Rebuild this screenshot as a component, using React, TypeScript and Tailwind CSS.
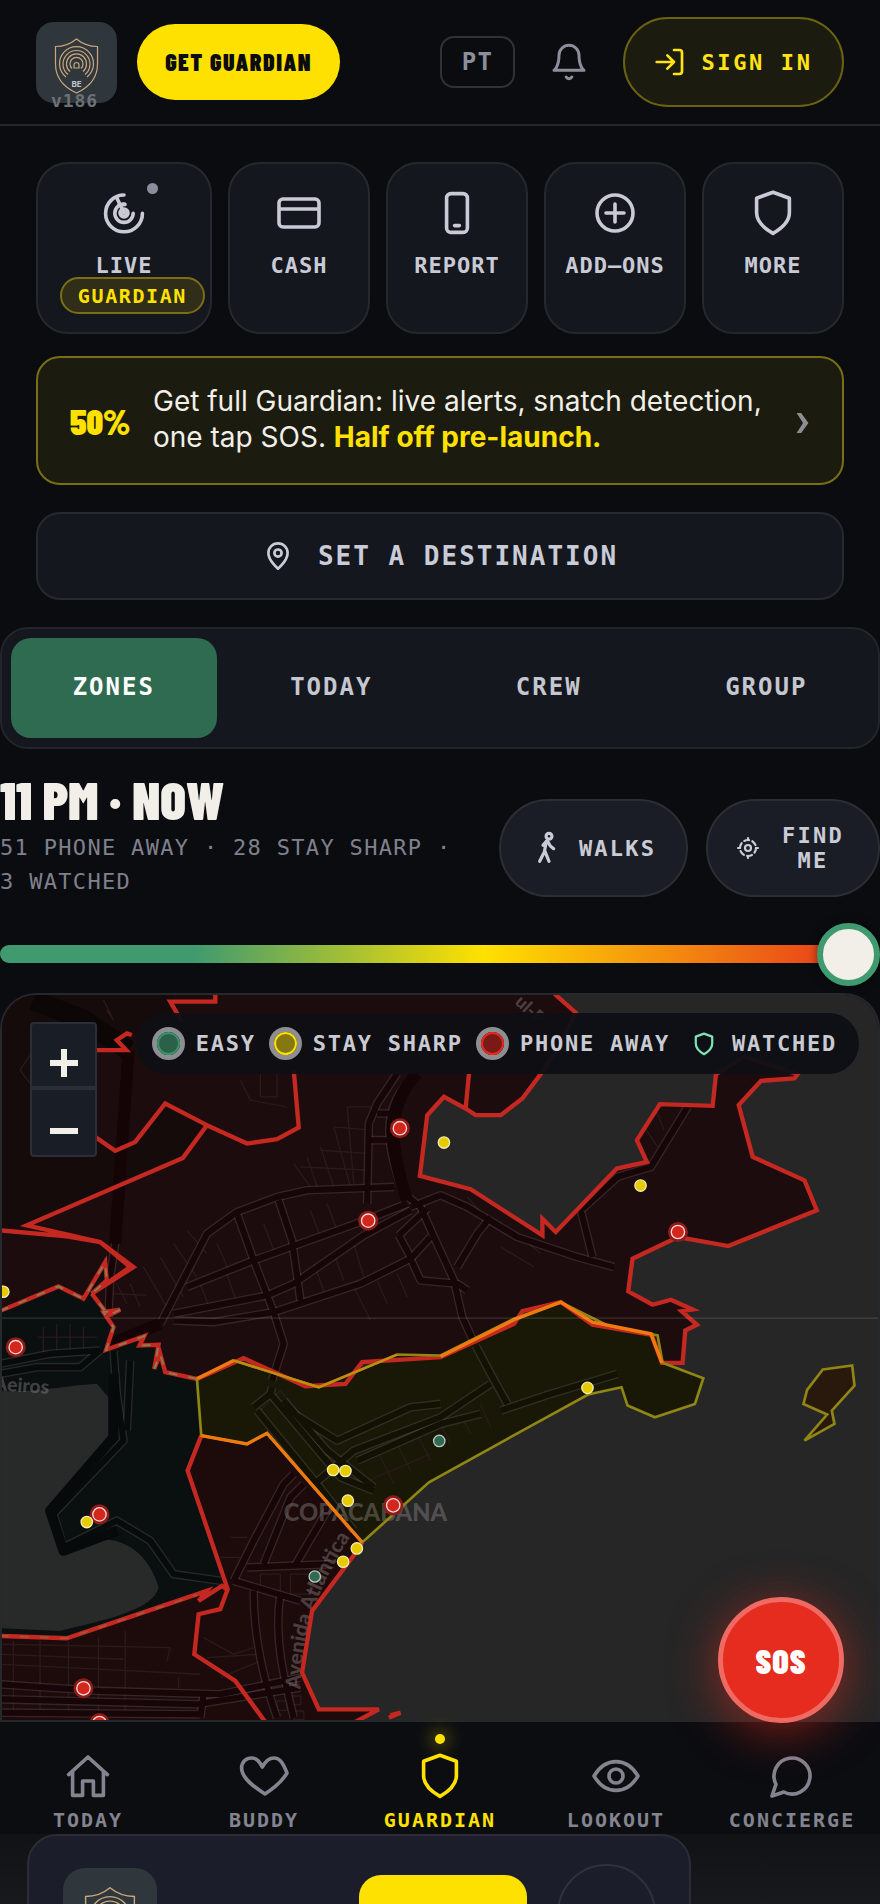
import type { ReactNode } from "react";

const mono = "font-['DejaVu_Sans_Mono',monospace]";
const display = "font-['Barlow_Condensed','Roboto_Condensed',sans-serif] font-black";

type IconProps = { className?: string; width?: number; children: ReactNode };

function Icon({ className = "size-12", width = 1.8, children }: IconProps) {
  return (
    <svg
      viewBox="0 0 24 24"
      aria-hidden="true"
      className={`${className} shrink-0 overflow-visible`}
      fill="none"
      stroke="currentColor"
      strokeWidth={width}
      strokeLinecap="round"
      strokeLinejoin="round"
    >
      {children}
    </svg>
  );
}

const shieldPath = "M12 1.6l8.2 3v7.2c0 4.6-3.6 7.8-8.2 10.4-4.6-2.6-8.2-5.800-8.2-10.400V4.600z";

function Logo({ className }: { className: string }) {
  return (
    <span className={`${className} block shrink-0 bg-[#30373c]`}>
      <svg viewBox="0 0 81 81" aria-hidden="true" className="size-full" fill="none" stroke="#c9a77c" strokeWidth="1.2">
        <path d="M40.5 17C34.5 22 27 24.5 19.5 24.5V42c0 14 8 23 21 29 13-6 21-15 21-29V24.5C54 24.5 46.5 22 40.5 17z" />
        <path d="M30 55a17 17 0 1 1 21 0" />
        <path d="M32 52.5a13.5 13.5 0 1 1 17 0" />
        <path d="M34 49.5a10 10 0 1 1 13 0" />
        <path d="M36 46.5a6.5 6.5 0 1 1 9 0" />
        <path d="M38 46v-3a2.5 2.5 0 0 1 5 0v3z" />
        <text x="40.5" y="64.5" textAnchor="middle" fontSize="8" fontWeight="bold" fontFamily="Inter, sans-serif" fill="#c4c5cb" stroke="none">
          BE
        </text>
      </svg>
    </span>
  );
}

function Header() {
  return (
    <header className="flex h-[126px] items-center border-b-2 border-[#25272b] px-9">
      <a href="#home" className="relative block size-[81px]" aria-label="Home v186">
        <Logo className="size-[81px] rounded-[18px]" />
        <span className={`${mono} absolute right-1 -bottom-2 left-0 text-center text-lg leading-5 font-bold tracking-wider text-[#6d7176]`}>
          v186
        </span>
      </a>
      <button className={`${display} ml-5 h-[76px] w-[203px] rounded-full bg-[#ffe100] text-2xl tracking-[1.5px] text-[#0b0c10]`}>GET GUARDIAN</button>
      <div className="ml-auto flex items-center gap-[34px]">
        <button className={`${mono} h-[52px] w-[75px] rounded-[14px] border-2 border-[#303238] text-2xl font-bold tracking-wider text-[#8d8e9b]`}>
          PT
        </button>
        <button aria-label="Notifications" className="text-[#8d8e9b]">
          <Icon className="size-10" width={1.8}>
            <path d="M6 8a6 6 0 0 1 12 0c0 7 3 9 3 9H3s3-2 3-9" />
            <path d="M10.3 21a1.94 1.94 0 0 0 3.4 0" />
          </Icon>
        </button>
        <button
          className={`${mono} flex h-[90px] w-[221px] items-center justify-center gap-[15px] rounded-full border-2 border-[#6a6211] bg-[#1c1b0f] text-[22px] font-bold tracking-[0.12em] text-[#ffe414]`}
        >
          <Icon className="size-8" width={2}>
            <path d="M15 3h4a2 2 0 0 1 2 2v14a2 2 0 0 1-2 2h-4M10 17l5-5-5-5M15 12H2" />
          </Icon>
          SIGN IN
        </button>
      </div>
    </header>
  );
}

const tiles = [
  {
    label: "LIVE",
    icon: (
      <>
        <path d="M12 3a9.2 9.2 0 1 0 9.2 9.2" />
        <path d="M12 7.5a4.6 4.6 0 1 0 4.6 4.6" />
        <circle cx="12" cy="12" r="1.8" strokeWidth="2.2" />
        <path d="M12 12L8.5 4.6M9.5 8l3-.3" />
      </>
    ),
  },
  { label: "CASH", icon: <path d="M4 5h16a2 2 0 0 1 2 2v10a2 2 0 0 1-2 2H4a2 2 0 0 1-2-2V7a2 2 0 0 1 2-2zM2 10h20" /> },
  {
    label: "REPORT",
    icon: <path d="M9 2.3h6a2.2 2.2 0 0 1 2.2 2.2v15a2.2 2.2 0 0 1-2.2 2.2H9a2.2 2.2 0 0 1-2.2-2.2v-15A2.2 2.2 0 0 1 9 2.3zM10.8 18.3h2.4" />,
  },
  {
    label: "ADD–ONS",
    icon: (
      <>
        <circle cx="12" cy="12" r="9" />
        <path d="M12 7.500v9M7.500 12h9" />
      </>
    ),
  },
  { label: "MORE", icon: <path d={shieldPath} /> },
];

function Tiles() {
  return (
    <nav aria-label="Shortcuts" className="grid grid-cols-[176fr_142fr_142fr_142fr_142fr] gap-4">
      {tiles.map((tile, i) => (
        <button
          key={tile.label}
          className="relative flex h-[172px] flex-col items-center rounded-[32px] border-2 border-[#26282d] bg-[#14171e] pt-[25px] text-[#c9cad6]"
        >
          <Icon>{tile.icon}</Icon>
          <span className={`${mono} mt-[15px] text-[22px] leading-7 font-bold tracking-[1px]`}>{tile.label}</span>
          {i === 0 && (
            <>
              <span className="absolute top-[19px] right-[52px] size-[11px] rounded-full bg-[#8d8e9b]" />
              <span
                className={`${mono} absolute top-[113px] right-[5px] flex h-[37px] items-center rounded-full border-2 border-[#7a6f14] bg-[#302d18] px-4 text-xl font-bold tracking-[0.08em] text-[#ffe100]`}
              >
                GUARDIAN
              </span>
            </>
          )}
        </button>
      ))}
    </nav>
  );
}

const tabs = ["ZONES", "TODAY", "CREW", "GROUP"];

function Tabs() {
  return (
    <div role="tablist" className="mt-[27px] grid h-[122px] grid-cols-4 gap-3 rounded-[28px] border-2 border-[#232529] bg-[#14171e] p-[9px]">
      {tabs.map((tab, i) => (
        <button
          key={tab}
          role="tab"
          aria-selected={i === 0}
          className={`${mono} rounded-[20px] pb-[2px] text-2xl font-bold tracking-[2px] ${i === 0 ? "bg-[#2e6b50] text-white" : "text-[#c4c6d0]"}`}
        >
          {tab}
        </button>
      ))}
    </div>
  );
}

function TimeRow() {
  const pill = `${mono} flex h-[98px] items-center rounded-full border-2 border-[#2c2e34] bg-[#1a1d25] text-[22px] leading-[25px] font-bold tracking-widest text-[#c9cbd6]`;
  return (
    <section className="mt-[18px] flex items-end justify-between">
      <div className="w-[470px]">
        <h1 className={`${display} text-[53px] leading-[64px] text-[#f1efe8]`}>11 PM · NOW</h1>
        <p className={`${mono} text-[22px] leading-[34px] tracking-[0.06em] text-[#7f818c]`}>51 PHONE AWAY · 28 STAY SHARP · 3 WATCHED</p>
      </div>
      <div className="mb-0.5 flex gap-[18px]">
        <button className={`${pill} w-[189px] justify-center gap-4`}>
          <Icon className="size-8" width={2.4}>
            <circle cx="13.5" cy="3.2" r="2.2" />
            <path d="M11.5 7l-1.500 8M11.500 7l-2.500 3M12.500 7l2 3.500 2.500 2M10 15L6.500 22M10.500 14.500l3 7.500" />
          </Icon>
          WALKS
        </button>
        <button className={`${pill} w-[174px] justify-center gap-4`}>
          <Icon className="size-6" width={2.2}>
            <circle cx="12" cy="12" r="8" strokeDasharray="5 3.4" />
            <circle cx="12" cy="12" r="3" />
            <path d="M12 2v2M12 20v2M2 12h2M20 12h2" />
          </Icon>
          <span className="w-[74px]">FIND ME</span>
        </button>
      </div>
    </section>
  );
}

type Road = { ground: "red" | "green" | "yellow"; d: string };

const roads: Road[] = [
  { ground: "red", d: "M385 180L345 760L330 860L325 980" },
  { ground: "red", d: "M480 1000L620 730L710 665L830 620L920 600L1180 590" },
  { ground: "red", d: "M480 1000L330 1060" },
  { ground: "red", d: "M560 890L760 810L1080 695L1220 640" },
  { ground: "red", d: "M520 970L800 915L880 880L1090 735L1230 660" },
  { ground: "red", d: "M520 990L640 995L820 965L1080 880L1230 805L1290 740" },
  { ground: "red", d: "M710 670L760 810L820 965L850 1060L815 1170" },
  { ground: "red", d: "M835 630L875 750L900 930" },
  { ground: "red", d: "M1100 640L1105 400L1130 340L1190 250" },
  { ground: "red", d: "M1250 250C1130 350 1160 480 1210 610L1260 650L1300 740L1360 870L1385 980L1415 1045" },
  { ground: "red", d: "M1230 650L1320 615L1400 650L1550 740L1730 800L1840 830" },
  { ground: "red", d: "M1230 805L1260 870L1370 880L1400 900" },
  { ground: "red", d: "M1195 735L1230 800M1195 735L1280 655" },
  { ground: "red", d: "M1370 830L1430 730L1470 680" },
  { ground: "red", d: "M1740 660L1775 800" },
  { ground: "red", d: "M1740 660L1850 560L1950 530L2060 350" },
  { ground: "red", d: "M1130 370L1180 370M1110 450L1180 450" },
  { ground: "green", d: "M0 1120L150 1090L300 1080" },
  { ground: "green", d: "M0 1150L110 1130L240 1130L300 1080" },
  { ground: "green", d: "M340 1080L350 1210L370 1350L160 1570L190 1670L350 1590L450 1650L520 1750L660 1770" },
  { ground: "green", d: "M390 1110L380 1320" },
  { ground: "yellow", d: "M1425 1065L1470 1150L1520 1240" },
  { ground: "yellow", d: "M815 1190L810 1210L760 1250M810 1210L1020 1460L1120 1500" },
  { ground: "yellow", d: "M770 1260L950 1480L1060 1620" },
  { ground: "yellow", d: "M850 1250L1010 1350L1230 1250L1320 1240" },
  { ground: "yellow", d: "M850 1230L980 1380L1120 1490" },
  { ground: "yellow", d: "M930 1490L1060 1380L1320 1280L1470 1180M1500 1260L1650 1210L1850 1150" },
  { ground: "yellow", d: "M1070 1410L1320 1300L1440 1270" },
  { ground: "red", d: "M700 1770L760 1650L850 1480L880 1450" },
  { ground: "red", d: "M790 1720L870 1520L910 1480" },
  { ground: "red", d: "M880 1730L980 1560" },
  { ground: "red", d: "M740 1730L1000 1720M700 1770L900 1830" },
  { ground: "red", d: "M760 1800C760 1950 790 2070 830 2180" },
  { ground: "red", d: "M840 1810C820 1940 850 2060 880 2180" },
  { ground: "red", d: "M0 2080L300 2100L660 2110L900 2060" },
  { ground: "red", d: "M0 2125L590 2140L900 2090" },
  { ground: "red", d: "M0 2165L600 2170M610 2110L600 2180" },
];

const roadFill = { red: "#170507", green: "#070b0b", yellow: "#121104" };

const lanes = [
  "M430 830L500 950M480 800L550 920M520 760L590 860M560 720L620 790M880 520L930 590M920 500L950 590M960 470L1000 590M1000 410L1050 590M1040 350L1060 580M1040 350L1110 350M1000 410L1110 420M960 480L1110 490M900 530L1110 540",
  "M650 760L690 850M790 700L820 780M930 660L960 740M980 640L1010 720M600 880L630 960M680 850L710 940M940 820L970 900M1000 790L1030 870M1060 760L1090 860",
  "M1060 890L1110 990M1130 870L1160 940M1190 850L1220 920M350 880L380 940M390 880L420 950M340 910L440 915",
  "M780 1260L840 1200L980 1370M1130 1380L1180 1480M1190 1360L1230 1440M1250 1330L1290 1410M1320 1300L1350 1360M1380 1270L1410 1330M1440 1240L1470 1310M1080 1480L1290 1390",
  "M0 1960L510 1970L500 2010M0 1990L370 2005M0 2020L600 2050M40 1950V2170M120 1950V2170M205 1950V2170M295 1940V2170M375 1920V2170M535 2060V2090M610 1940L700 1990L760 1970M620 2000L780 1990M660 2060L780 2010",
  "M690 1640L740 1640M660 1700L720 1700M130 1010V1090M170 1000V1090M210 1000V1080M250 1010V1080M110 1040H290M780 250V320H830V240M720 270L750 330L860 350",
  "M1400 620L1470 700M1500 770L1600 830M1550 730L1620 790M1960 350L1990 420M1930 410L1970 470M780 1750H840V1800H780zM870 1750H930V1810H870z",
  "M830 2130h30v28h-30zM875 2115h26v26h-26zM880 2160h30v25h-30zM60 240L100 180M60 240L90 280M320 60L340 90L310 30",
];

const markers: { kind: "red" | "yellow" | "green"; x: number; y: number }[] = [
  { kind: "red", x: 1198, y: 414 },
  { kind: "red", x: 1103, y: 691 },
  { kind: "red", x: 47, y: 1070 },
  { kind: "red", x: 2031, y: 725 },
  { kind: "red", x: 298, y: 1571 },
  { kind: "red", x: 250, y: 2092 },
  { kind: "red", x: 1178, y: 1544 },
  { kind: "red", x: 298, y: 2196 },
  { kind: "yellow", x: 1330, y: 457 },
  { kind: "yellow", x: 10, y: 904 },
  { kind: "yellow", x: 1919, y: 586 },
  { kind: "yellow", x: 1760, y: 1192 },
  { kind: "yellow", x: 998, y: 1438 },
  { kind: "yellow", x: 1035, y: 1441 },
  { kind: "yellow", x: 1042, y: 1530 },
  { kind: "yellow", x: 1069, y: 1673 },
  { kind: "yellow", x: 1028, y: 1713 },
  { kind: "yellow", x: 260, y: 1594 },
  { kind: "green", x: 1316, y: 1351 },
  { kind: "green", x: 943, y: 1757 },
];

const coast =
  "M1640 -20L1665 15L1725 68L1680 160L1620 252L1565 325L1500 375L1425 375L1395 355L1330 320L1280 375L1258 557L1410 597L1625 735L1625 685L1665 725L1848 535L1938 515L1908 450L1977 342L2135 347L2145 252L2230 200L2390 252L2380 265L2280 272L2213 345L2255 500L2410 570L2447 660L2182 767L2031 740L1895 805L1882 903L1955 943L2010 928L2075 957L2042 962L2088 1003L2053 1020L2045 1117L1983 1117L1952 1033L1775 1003L1680 935L1565 962L1540 1000L1320 1100L1085 1115L1035 1180L915 1187L730 1103L590 1165";
const ragged = "L495 1145L480 1090L462 1135L475 1063L418 1065L432 1037L318 1078L340 1010L310 965L360 958L325 975L275 910";
const greenZone =
  "M0 962L175 888L250 925L315 815L320 870L275 910L325 975L340 1010L318 1078L432 1037L418 1065L475 1063L462 1135L480 1090L495 1145L590 1165L603 1335L562 1440L680 1785L590 1815L200 1942L0 1935z";
const yellowZone =
  "M590 1165L700 1110L955 1190L1190 1092L1320 1095L1540 985L1680 935L1820 1005L1970 1035L1985 1117L2107 1163L2082 1240L1962 1280L1880 1245L1862 1190L1762 1212L1565 1320L1285 1475L1085 1655L800 1328L740 1360L603 1335z";
const southZone =
  "M603 1335L740 1360L800 1328L1085 1655L1070 1680L935 1860L905 2045L955 2155L1135 2157L1060 2200L790 2200L0 2200V1935L200 1942L600 1810L665 1785L680 1795L562 1440z";

function MapDrawing() {
  return (
    <svg viewBox="6 15 2628 2172" preserveAspectRatio="xMinYMin slice" className="absolute inset-0 size-full" role="img" aria-label="Map of Copacabana">
      <rect x="0" y="0" width="2640" height="2700" fill="#262626" />
      <path d={`${coast}${ragged}L0 960V-20z`} fill="#1d0c0d" />
      <path d="M0 -20H510L535 68L395 135L378 180H290V443L345 482L405 455L495 340L620 405L548 503L80 705L0 720z" fill="#150b0a" />
      <path d={southZone} fill="#1d0b0c" />
      <path d={greenZone} fill="#0a0f0f" />
      <path d={yellowZone} fill="#191807" />
      <path d="M100 30L250 90L385 180" stroke="#0d0606" strokeWidth="60" fill="none" />
      <path d="M0 1200C80 1210 200 1185 290 1180L325 1220V1340L140 1560L185 1685L270 1650C400 1625 460 1730 475 1790C460 1860 300 1890 180 1920L0 1912z" fill="#272a29" />
      <g fill="none" strokeLinejoin="round">
        <g stroke="#2b1a1c" strokeWidth="4">
          {lanes.map((d) => (
            <path key={d} d={d} />
          ))}
        </g>
        <g stroke="#777072" strokeOpacity="0.26" strokeWidth="26">
          {roads.map((road) => (
            <path key={road.d} d={road.d} />
          ))}
        </g>
        <g strokeWidth="18">
          {roads.map((road) => (
            <path key={road.d} d={road.d} stroke={roadFill[road.ground]} />
          ))}
        </g>
        <path d="M1250 250C1150 350 1170 480 1220 630M480 1000L330 1060M385 180L345 760" stroke="#150406" strokeWidth="36" />
        <path d="M340 1150L340 1340L150 1560L190 1680L350 1620" stroke="#060a0a" strokeWidth="30" />
      </g>
      <g fontFamily="Lato, sans-serif" fill="#a5a0a0" fillOpacity="0.36" fontWeight="900">
        <text x="850" y="1592" fontSize="71">COPACABANA</text>
        <text x="-20" y="1200" fontSize="58" transform="rotate(4 0 1200)">Aeiros</text>
        <text x="1540" y="40" fontSize="54" transform="rotate(42 1540 40)">ul-P</text>
        <path id="avenue" d="M900 2095C905 1950 930 1810 1075 1600" fill="none" />
        <text fontSize="62">
          <textPath href="#avenue">Avenida Atlântica</textPath>
        </text>
      </g>
      <g fill="none" stroke="#c42820" strokeWidth="13" strokeLinejoin="miter">
        <path d={`${coast}${ragged}`} />
        <path d="M275 910L400 830L300 755L80 705L548 503L620 405L495 340L405 455L345 482L285 440M620 405L740 460L830 447L895 412L880 240M290 180H378L350 150L380 130L395 135M545 95L510 35H645V10M1405 250L1395 355M0 720L200 738L300 755L390 830L275 910" />
        <path d="M0 962L175 888L250 925L315 815L320 870L275 910" />
        <path d="M603 1335L562 1440L682 1795L660 1855L595 1870L582 1990L705 2070L800 2200M0 1935L200 1942L620 1800L595 1830L665 1785L685 1800M1085 1655L1070 1680L935 1860L905 2045L955 2155H1135L1060 2195M1165 2180L1200 2165L1170 2172" />
      </g>
      <g fill="none" stroke="#8d7a52" strokeWidth="6" strokeDasharray="26 34">
        <path d="M0 962L175 888L250 925L315 815L320 870L275 910" />
        <path d={`M590 1165${ragged}`} />
        <path d="M0 1935L200 1942L590 1812" strokeOpacity="0.5" />
      </g>
      <path d={yellowZone} fill="none" stroke="#8f8614" strokeWidth="8" />
      <path d="M590 1165L700 1110M1320 1098L1540 988L1680 935L1775 995L1950 1030L1983 1117M603 1335L740 1360L800 1328L1085 1655" fill="none" stroke="#f07a10" strokeWidth="10" />
      <path d="M700 1110L955 1190L1190 1092" fill="none" stroke="#c78b10" strokeWidth="7" />
      <path d="M2465 1137L2553 1125L2560 1185L2492 1260L2500 1300L2410 1350L2478 1272L2407 1240L2418 1198z" fill="#29180c" stroke="#8f8614" strokeWidth="8" />
      <path d="M0 983H2640" stroke="#ffffff" strokeOpacity="0.14" strokeWidth="4" />
      {markers.map((m) =>
        m.kind === "red" ? (
          <g key={`${m.x}-${m.y}`}>
            <circle cx={m.x} cy={m.y} r="30" fill="#8f1a1a" />
            <circle cx={m.x} cy={m.y} r="20" fill="#d3261c" stroke="#f3d9d4" strokeWidth="4" />
          </g>
        ) : (
          <circle
            key={`${m.x}-${m.y}`}
            cx={m.x}
            cy={m.y}
            r="17"
            fill={m.kind === "yellow" ? "#e6cb00" : "#2e6b50"}
            stroke={m.kind === "yellow" ? "#f4ecb0" : "#b9c6bf"}
            strokeWidth="4"
          />
        )
      )}
    </svg>
  );
}

function LegendDot({ className }: { className: string }) {
  return (
    <span className="size-[33px] shrink-0 rounded-full border-[5px] border-[#8d8e94]">
      <span className={`${className} block size-full rounded-full border-2`} />
    </span>
  );
}

function CityMap() {
  return (
    <section aria-label="Zone map" className="relative mt-[7px] min-h-[400px] flex-1 overflow-hidden rounded-t-[36px] border-2 border-b-0 border-[#25282d]">
      <MapDrawing />
      <div className="absolute top-[27px] left-7 flex w-[67px] flex-col overflow-hidden rounded border-2 border-[#2a2e38] bg-[#191d26] text-[#f1efe8]">
        <button aria-label="Zoom in" className="flex h-[66px] items-center justify-center border-b-4 border-[#2a2e38] pt-4">
          <svg viewBox="0 0 30 30" className="size-[30px]" stroke="currentColor" strokeWidth="6">
            <path d="M1 15h28M15 1v28" />
          </svg>
        </button>
        <button aria-label="Zoom out" className="flex h-[65px] items-center justify-center pt-4">
          <svg viewBox="0 0 30 30" className="size-[30px]" stroke="currentColor" strokeWidth="6">
            <path d="M1 15h28" />
          </svg>
        </button>
      </div>
      <ul className={`${mono} absolute top-[18px] right-[19px] flex h-[61px] items-center gap-[13px] rounded-full bg-[#0e0f14]/95 pr-[22px] pl-4 text-[22px] font-bold tracking-[0.08em] whitespace-nowrap text-[#c9cad2]`}>
        <li className="flex items-center gap-[11px]">
          <LegendDot className="border-[#3a9469] bg-[#2b6149]" />
          EASY
        </li>
        <li className="flex items-center gap-[11px]">
          <LegendDot className="border-[#ffe100] bg-[#857711]" />
          STAY SHARP
        </li>
        <li className="flex items-center gap-[11px]">
          <LegendDot className="border-[#e8291c] bg-[#7a1a17]" />
          PHONE AWAY
        </li>
        <li className="flex items-center gap-4 pl-[9px]">
          <Icon className="size-6 text-[#7fe3b5]" width={2.2}>
            <path d={shieldPath} />
          </Icon>
          WATCHED
        </li>
      </ul>
    </section>
  );
}

const navItems = [
  { label: "TODAY", icon: <path d="M2.3 11.3L12 2.5l9.7 8.8M4.3 10v11.7h5V14.5h5.4v7.2h5V10" /> },
  {
    label: "BUDDY",
    icon: <path d="M12.5 21C7 17.5 0.8 13 0.8 8 0.8 5 3 3 5.8 3c2.7 0 4 2 5.4 4.5C12.5 5 14.5 3 17 3c3.2 0 4.7 3 6.5 7.5C21.5 14 17 18 12.5 21z" />,
  },
  { label: "GUARDIAN", icon: <path d={shieldPath} /> },
  {
    label: "LOOKOUT",
    icon: (
      <>
        <path d="M1 12C4 7 8 4.8 12 4.8S20 7 23 12C20 17 16 19.2 12 19.2S4 17 1 12z" />
        <circle cx="12" cy="12" r="3.5" />
      </>
    ),
  },
  { label: "CONCIERGE", icon: <path d="M7.9 20A9 9 0 1 0 4 16.1L2 22Z" /> },
];

function BottomNav() {
  return (
    <nav aria-label="Main" className="relative grid h-[114px] shrink-0 grid-cols-5 border-t-2 border-[#25272b] bg-[#0c0d11]">
      {navItems.map((item, i) => (
        <a
          key={item.label}
          href={`#${item.label.toLowerCase()}`}
          className={`relative flex flex-col items-center pt-[30px] ${i === 2 ? "text-[#ffe100]" : "text-[#83848f]"}`}
        >
          {i === 2 && <span className="absolute top-3 size-[10px] rounded-full bg-[#ffe100] shadow-[0_0_18px_#ffe100]" />}
          <Icon>{item.icon}</Icon>
          <span className={`${mono} mt-2 text-xl leading-6 font-bold tracking-[2px]`}>{item.label}</span>
        </a>
      ))}
      <button
        className={`${display} absolute -top-[125px] right-9 size-[126px] rounded-full border-5 border-[#ee6a62] bg-[#e62c1e] text-[34px] tracking-[1px] text-white shadow-[0_8px_48px_rgba(230,44,30,0.55)]`}
      >
        SOS
      </button>
    </nav>
  );
}

export default function App() {
  return (
    <div className="flex h-screen min-h-[1500px] flex-col overflow-hidden bg-[#0a0c10] font-[Inter,sans-serif]">
      <Header />
      <main className="flex flex-1 flex-col pt-9">
        <div className="px-9">
          <Tiles />
          <a href="#offer" className="mt-[22px] flex h-[129px] items-center rounded-3xl border-2 border-[#796f15] bg-[#1b1b0f] px-8">
            <span className={`${display} w-[83px] text-4xl text-[#ffe100]`}>50%</span>
            <span className="flex-1 pr-6 pb-1 text-[28px] leading-9 text-[#f1efe8]">
              Get full Guardian: live alerts, snatch detection, one tap SOS. <strong className="font-bold text-[#ffe100]">Half off pre-launch.</strong>
            </span>
            <svg viewBox="0 0 14 22" aria-hidden="true" className="mt-1 h-5 w-[14px] shrink-0 fill-[#8d8e94]">
              <path d="M0 0H5L13 11L5 22H0L7 11z" />
            </svg>
          </a>
          <button
            className={`${mono} mt-[27px] flex h-[88px] w-full items-center justify-center gap-6 rounded-3xl border-2 border-[#26292e] bg-[#14171e] text-[26px] font-bold tracking-[2px] text-[#c9cbd6]`}
          >
            <Icon className="size-8" width={2}>
              <path d="M12 21.5s7.2-6 7.2-11.8a7.2 7.2 0 0 0-14.4 0C4.8 15.5 12 21.5 12 21.5z" />
              <circle cx="12" cy="9.8" r="2.7" />
            </Icon>
            SET A DESTINATION
          </button>
        </div>
        <Tabs />
        <TimeRow />
        <label className="mt-[23px] block h-16">
          <span className="sr-only">Hour</span>
          <input
            type="range"
            min={0}
            max={23}
            defaultValue={23}
            className="block h-16 w-full appearance-none bg-transparent [&::-webkit-slider-runnable-track]:h-[18px] [&::-webkit-slider-runnable-track]:rounded-full [&::-webkit-slider-runnable-track]:bg-[linear-gradient(90deg,#3f9a70_0%,#3f9a70_22%,#ffe100_55%,#e62c1e_100%)] [&::-webkit-slider-thumb]:-mt-[22px] [&::-webkit-slider-thumb]:size-[63px] [&::-webkit-slider-thumb]:appearance-none [&::-webkit-slider-thumb]:rounded-full [&::-webkit-slider-thumb]:border-[6px] [&::-webkit-slider-thumb]:border-[#3f9a70] [&::-webkit-slider-thumb]:bg-[#f1efe8] [&::-webkit-slider-thumb]:shadow-[0_0_10px_rgba(0,0,0,0.5)]"
          />
        </label>
        <CityMap />
      </main>
      <BottomNav />
      <footer className="h-[70px] shrink-0 overflow-hidden bg-gradient-to-b from-[#101216] to-[#17191c] pr-[189px] pl-[27px]">
        <div className="flex h-[180px] items-start rounded-[30px] border-2 border-[#2a2d35] bg-[#1b1e2a] pt-8 pr-[33px] pl-[34px]">
          <Logo className="size-[94px] rounded-[22px]" />
          <button aria-label="Install" className="mt-[7px] ml-auto h-[90px] w-[168px] rounded-[22px] bg-[#ffe100]" />
          <button aria-label="Dismiss" className="-mt-1 ml-[30px] size-[99px] rounded-full border-2 border-[#2f323a]" />
        </div>
      </footer>
    </div>
  );
}
